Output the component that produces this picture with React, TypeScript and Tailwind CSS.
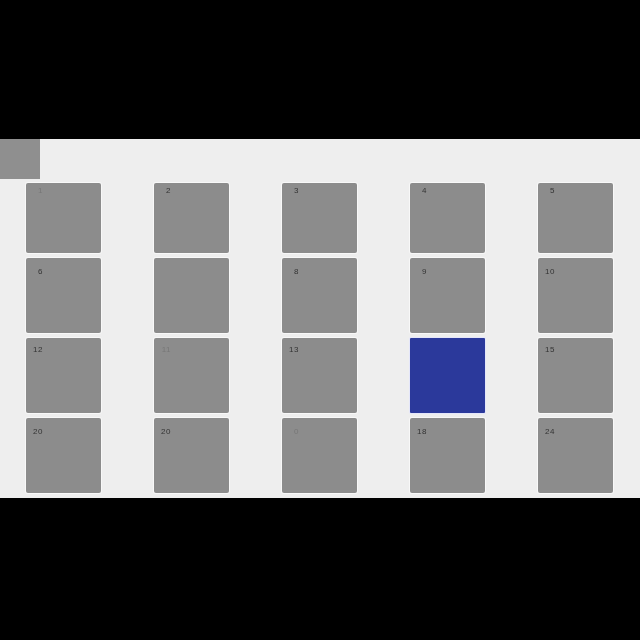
import React from 'react';

type Tile = { label: string; faint?: boolean; active?: boolean };

const rows: { height: string; labelTop: string; tiles: Tile[] }[] = [
  {
    height: 'h-[70px]',
    labelTop: 'pt-[3px]',
    tiles: [{ label: '1', faint: true }, { label: '2' }, { label: '3' }, { label: '4' }, { label: '5' }],
  },
  {
    height: 'h-[75px]',
    labelTop: 'pt-[9px]',
    tiles: [{ label: '6' }, { label: '' }, { label: '8' }, { label: '9' }, { label: '10' }],
  },
  {
    height: 'h-[75px]',
    labelTop: 'pt-[7px]',
    tiles: [{ label: '12' }, { label: '11', faint: true }, { label: '13' }, { label: '', active: true }, { label: '15' }],
  },
  {
    height: 'h-[75px]',
    labelTop: 'pt-[9px]',
    tiles: [{ label: '20' }, { label: '20' }, { label: '0', faint: true }, { label: '18' }, { label: '24' }],
  },
];

function TileBox({ tile, height, labelTop }: { tile: Tile; height: string; labelTop: string }) {
  if (tile.active) {
    return <div className={`${height} w-[75px] rounded-[1px] bg-[#2b399b] shadow-[0_0_0_1px_#e4e6fa]`} />;
  }
  return (
    <div className={`${height} ${labelTop} w-[75px] rounded-[2px] bg-[#8c8c8c] pl-[7px] shadow-[0_0_0_1px_#f8f8f8]`}>
      <span
        className={`block w-[10px] text-right font-['Liberation_Sans',sans-serif] text-[8px] leading-[10px] tracking-[0.5px] blur-[0.4px] ${
          tile.faint ? 'text-[#777777]' : 'text-[#333333]'
        }`}
      >
        {tile.label}
      </span>
    </div>
  );
}

export default function App() {
  return (
    <div className="flex h-[640px] w-[640px] flex-col justify-start overflow-hidden bg-black">
      <div className="h-[139px] shrink-0" />
      <div className="h-[359px] shrink-0 bg-[#eeeeee]">
        <div className="h-10 w-10 bg-[#8f8f8f]" />
        <div className="mt-1 flex flex-col gap-[5px] pl-[26px]">
          {rows.map((row, i) => (
            <div key={i} className="flex gap-[53px]">
              {row.tiles.map((tile, j) => (
                <TileBox key={j} tile={tile} height={row.height} labelTop={row.labelTop} />
              ))}
            </div>
          ))}
        </div>
      </div>
    </div>
  );
}
